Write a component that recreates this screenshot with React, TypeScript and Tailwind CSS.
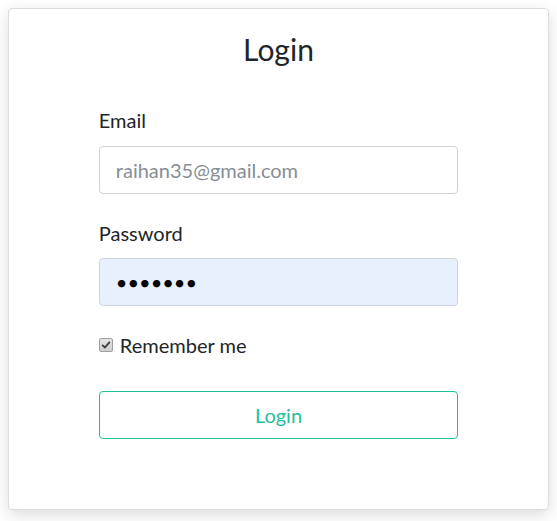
import { useState } from "react";

export default function App() {
  const [remember, setRemember] = useState(true);

  return (
    <div className="min-h-screen bg-white p-2" style={{ fontFamily: "Lato, 'Noto Sans', sans-serif" }}>
      <div className="rounded border border-[#dddddd] bg-white pt-[22px] pb-[70px] shadow-[0_5px_16px_rgba(0,0,0,0.14)]">
        <h1 className="text-center text-[30px] leading-[36px] font-normal text-[#212529]">Login</h1>

        <form className="mx-auto mt-[41px] w-2/3" onSubmit={(e) => e.preventDefault()}>
          <label className="mb-[14px] block text-[20px] leading-[24px] text-[#212529]">Email</label>
          <input
            type="email"
            placeholder="raihan35@gmail.com"
            className="block h-[48px] w-full rounded border border-[#ced4da] bg-white px-4 text-[20px] text-[#495057] placeholder-[#868e96] outline-none"
          />

          <label className="mt-[27px] mb-[13px] block text-[20px] leading-[24px] text-[#212529]">Password</label>
          <input
            type="password"
            defaultValue="1234567"
            className="block h-[48px] w-full rounded border border-[#ced4da] bg-[#e8f0fe] px-4 text-[20px] text-black outline-none"
          />

          <label className="mt-[27px] flex h-[24px] cursor-pointer items-center text-[20px] leading-[24px] text-[#212529]">
            <input type="checkbox" className="sr-only" checked={remember} onChange={(e) => setRemember(e.target.checked)} />
            <span className="mr-[7px] flex h-[14px] w-[14px] items-center justify-center rounded-[2px] border border-[#a0a0a0] bg-gradient-to-b from-[#e4e4e4] to-[#cfcfcf]">
              {remember && (
                <svg viewBox="0 0 12 12" className="h-[10px] w-[10px]">
                  <path d="M2 6.5 L4.8 9 L10 2.8" fill="none" stroke="#3c3c3c" strokeWidth="2.2" strokeLinecap="round" strokeLinejoin="round" />
                </svg>
              )}
            </span>
            Remember me
          </label>

          <button
            type="submit"
            className="mt-[34px] block h-[48px] w-full rounded border border-[#20c09a] bg-white text-[20px] text-[#1fbf99]"
          >
            Login
          </button>
        </form>
      </div>
    </div>
  );
}
